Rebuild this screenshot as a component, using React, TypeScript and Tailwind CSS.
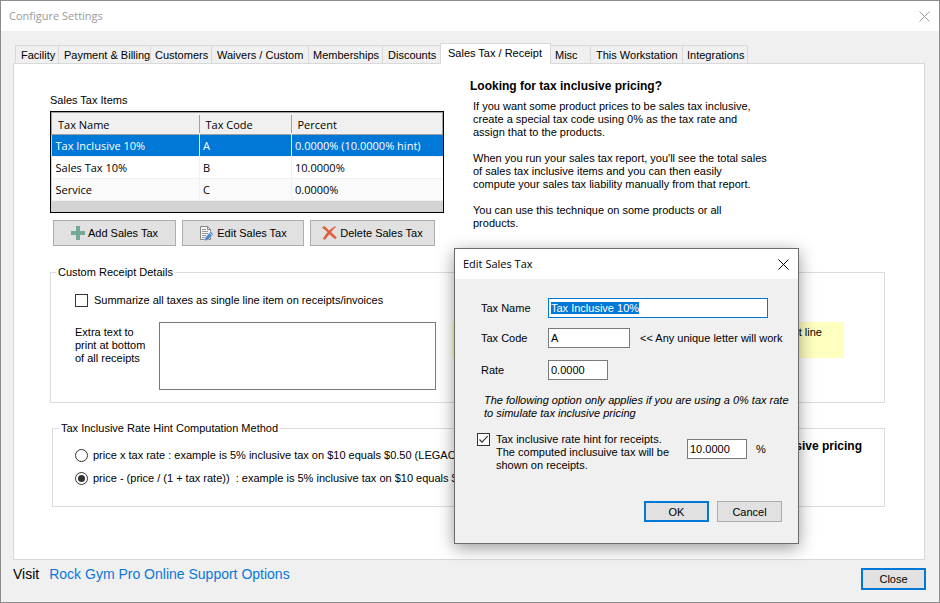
import { useEffect, useRef } from "react"

interface Tab {
  label: string
  className: string
}

const TABS: Tab[] = [
  { label: "Facility", className: "w-[43px] pl-[5px]" },
  { label: "Payment & Billing", className: "w-[92px] pl-[5px]" },
  { label: "Customers", className: "w-[61px] pl-[4px]" },
  { label: "Waivers / Custom", className: "w-[97px] pl-[5px]" },
  { label: "Memberships", className: "w-[74px] pl-[4px]" },
  { label: "Discounts", className: "w-[58px] pl-[5px]" },
  { label: "Sales Tax / Receipt", className: "" },
  { label: "Misc", className: "w-[39px] border-l-0 pl-[4px]" },
  { label: "This Workstation", className: "w-[92px] pl-[5px]" },
  { label: "Integrations", className: "w-[66px] border-r pl-[4px]" },
]

const TAX_ITEMS = [
  { name: "Tax Inclusive 10%", code: "A", percent: "0.0000% (10.0000% hint)", row: "bg-[#0078d7] text-white" },
  { name: "Sales Tax 10%", code: "B", percent: "10.0000%", row: "bg-white" },
  { name: "Service", code: "C", percent: "0.0000%", row: "bg-[#fafafa]" },
]

const SEGOE = "font-['Open_Sans','Noto_Sans',sans-serif]"
const BUTTON = "flex items-center justify-center border border-[#adadad] bg-[#e1e1e1] whitespace-nowrap"
const DEFAULT_BUTTON = "border-2 border-[#0078d7] bg-[#e1e1e1]"
const INPUT = "h-5 border bg-white px-[2px] outline-none"
const RADIO = "size-[13px] shrink-0 appearance-none rounded-full border border-[#333] bg-clip-content p-[2px] checked:bg-[#333]"

function CloseIcon() {
  return (
    <svg width="11" height="11" viewBox="0 0 11 11" fill="none" stroke="currentColor">
      <path d="M.5.5l10 10M10.5.5l-10 10" />
    </svg>
  )
}

function AddIcon() {
  return (
    <svg width="14" height="14" viewBox="0 0 14 14" fill="#74a997">
      <path d="M5 0h4v5h5v4H9v5H5V9H0V5h5z" />
    </svg>
  )
}

function EditIcon() {
  return (
    <svg width="15" height="15" viewBox="0 0 15 15" fill="none">
      <path d="M1.5.5h7l3 3v10h-10z" fill="#f4f4f4" stroke="#888" />
      <path d="M8.5.5v3h3" stroke="#888" />
      <path d="M3 3.5h4M3 5.5h6M3 7.5h6M3 9.5h4M3 11.5h3" stroke="#999" />
      <path d="M11.500 5.500l3 2.500-5.500 6-3.500 1 .8-3.600z" fill="#4f86c6" stroke="#dfe9f5" strokeWidth=".5" />
      <path d="M10.300 6.800l3 2.500" stroke="#cfe0f2" />
    </svg>
  )
}

function DeleteIcon() {
  return (
    <svg width="15" height="14" viewBox="0 0 15 14" fill="#dd5f43">
      <path d="M0 1.500L2.500 0c1.600 1.600 3 3.100 4.700 4.500C9.300 2.800 11.300 1.200 13.500.3l.5.8C12.200 2.600 10.600 4.200 9.200 6.100c1.600 1.800 3.500 3.600 5.600 5.200L13 13.200c-2-1.500-3.800-3.200-5.400-4.900C5.800 10 4.300 11.800 3 13.800L.8 13C2 10.600 3.700 8.400 5.500 6.300 3.700 4.600 1.900 3 0 1.500z" />
    </svg>
  )
}

function Checkbox({ id, checked }: { id: string; checked?: boolean }) {
  return (
    <span className="grid size-[13px] shrink-0">
      <input
        id={id}
        type="checkbox"
        defaultChecked={checked}
        className="peer col-start-1 row-start-1 size-[13px] appearance-none border border-[#333] bg-white"
      />
      <svg
        className="pointer-events-none invisible col-start-1 row-start-1 peer-checked:visible"
        viewBox="0 0 13 13"
        fill="none"
        stroke="#333"
        strokeWidth="1.2"
      >
        <path d="M2.500 6.500L5 9.200l5.700-6" />
      </svg>
    </span>
  )
}

function TaxTable() {
  return (
    <div className="mt-[3px] h-[102px] border border-black bg-[#d3d3d3]">
      <table className={`w-full table-fixed border-collapse text-left text-[11px] leading-[20px] ${SEGOE}`}>
        <colgroup>
          <col className="w-[148px]" />
          <col className="w-[92px]" />
          <col />
        </colgroup>
        <thead>
          <tr className="h-[22px] border border-[#a0a0a0] bg-[#f0f0f0]">
            {["Tax Name", "Tax Code", "Percent"].map((title, i) => (
              <th key={title} className="p-0 pt-px font-normal">
                <div className={`h-[18px] pl-[6px] leading-[20px] ${i < 2 ? "border-r border-[#a0a0a0]" : ""}`}>
                  {title}
                </div>
              </th>
            ))}
          </tr>
        </thead>
        <tbody>
          {TAX_ITEMS.map((item) => (
            <tr key={item.code} className={`h-[22px] border-b border-[#f0f0f0] ${item.row}`}>
              <td className="border-r border-[#f0f0f0] p-0 pl-[4px]">{item.name}</td>
              <td className="border-r border-[#f0f0f0] p-0 pl-[3px]">{item.code}</td>
              <td className="p-0 pl-[3px]">{item.percent}</td>
            </tr>
          ))}
        </tbody>
      </table>
    </div>
  )
}

function EditSalesTaxDialog() {
  const nameRef = useRef<HTMLInputElement>(null)

  useEffect(() => {
    nameRef.current?.focus()
    nameRef.current?.select()
  }, [])

  return (
    <div
      role="dialog"
      aria-labelledby="dialog-title"
      className="absolute top-[247px] left-[453px] w-[345px] border border-[#6b6b6b] bg-[#f0f0f0] shadow-[0_4px_16px_rgba(0,0,0,0.4)]"
    >
      <div className="flex h-[30px] items-center justify-between bg-white pr-[9px] pl-2">
        <h2 id="dialog-title" className={`text-[11px] ${SEGOE}`}>
          Edit Sales Tax
        </h2>
        <button aria-label="Close dialog">
          <CloseIcon />
        </button>
      </div>

      <form className="pt-[19px] pb-[21px]" onSubmit={(e) => e.preventDefault()}>
        <div className="flex flex-col gap-[10px] pl-[26px]">
          <div className="flex items-center">
            <label htmlFor="tax-name" className="w-[67px]">Tax Name</label>
            <input
              id="tax-name"
              ref={nameRef}
              defaultValue="Tax Inclusive 10%"
              className={`${INPUT} w-[220px] border-[#0078d7] selection:bg-[#0078d7] selection:text-white`}
            />
          </div>
          <div className="flex items-center">
            <label htmlFor="tax-code" className="w-[67px]">Tax Code</label>
            <input id="tax-code" defaultValue="A" className={`${INPUT} w-[82px] border-[#7a7a7a]`} />
            <span className="pl-[10px]">&lt;&lt; Any unique letter will work</span>
          </div>
          <div className="flex items-center pt-[2px]">
            <label htmlFor="rate" className="w-[67px]">Rate</label>
            <input id="rate" defaultValue="0.0000" className={`${INPUT} w-[60px] border-[#7a7a7a]`} />
          </div>
        </div>

        <p className="mt-[14px] pl-[29px] leading-[13px] italic">
          The following option only applies if you are using a 0% tax rate
          <br />
          to simulate tax inclusive pricing
        </p>

        <div className="mt-[13px] flex items-start pl-[22px]">
          <Checkbox id="rate-hint" checked />
          <label htmlFor="rate-hint" className="w-[197px] pl-[6px] leading-[13px]">
            Tax inclusive rate hint for receipts.
            <br />
            The computed inclusuive tax will be
            <br />
            shown on receipts.
          </label>
          <div className="mt-[6px] flex items-center">
            <input aria-label="Rate hint" defaultValue="10.0000" className={`${INPUT} w-[60px] border-[#7a7a7a]`} />
            <span className="pl-[9px]">%</span>
          </div>
        </div>

        <div className="mt-[29px] flex justify-end gap-2 pr-4">
          <button className={`${DEFAULT_BUTTON} h-[21px] w-[65px]`}>OK</button>
          <button className={`${BUTTON} h-[21px] w-[65px]`}>Cancel</button>
        </div>
      </form>
    </div>
  )
}

export default function App() {
  return (
    <div className="relative flex min-h-screen flex-col overflow-hidden border border-[#8c8c8c] bg-[#f0f0f0] font-['Liberation_Sans',Arial,sans-serif] text-[11px] leading-4 text-black">
      <header className="flex h-[30px] items-center justify-between bg-white pr-[9px] pl-2 text-[#999]">
        <h1 className={`text-[11px] ${SEGOE}`}>Configure Settings</h1>
        <button aria-label="Close window">
          <CloseIcon />
        </button>
      </header>

      <nav className="mt-3 flex items-end pl-[14px]">
        {TABS.map((tab) =>
          tab.label === "Sales Tax / Receipt" ? (
            <button
              key={tab.label}
              className="z-10 -mb-px h-[21px] w-[111px] border border-b-0 border-[#d9d9d9] bg-white pb-[2px] pl-[7px] text-left whitespace-nowrap"
            >
              {tab.label}
            </button>
          ) : (
            <button
              key={tab.label}
              className={`h-[18px] border-t border-l border-[#d9d9d9] text-left whitespace-nowrap ${tab.className}`}
            >
              {tab.label}
            </button>
          ),
        )}
      </nav>

      <main className="mr-[14px] ml-3 flex-1 border border-[#d9d9d9] bg-white pt-[14px] pr-[39px] pl-9">
        <section className="flex items-start gap-[26px]">
          <div className="w-[394px] shrink-0 pt-[14px]">
            <h2>Sales Tax Items</h2>
            <TaxTable />
            <div className="mt-[7px] flex gap-[6px] pl-[3px]">
              <button className={`${BUTTON} h-[26px] w-[123px] gap-[3px]`}>
                <AddIcon />
                Add Sales Tax
              </button>
              <button className={`${BUTTON} h-[26px] w-[122px] gap-[3px]`}>
                <EditIcon />
                Edit Sales Tax
              </button>
              <button className={`${BUTTON} h-[26px] w-[125px] gap-[3px]`}>
                <DeleteIcon />
                Delete Sales Tax
              </button>
            </div>
          </div>

          <div>
            <h2 className="text-[12px] font-bold">Looking for tax inclusive pricing?</h2>
            <div className="mt-[6px] flex flex-col gap-[13px] pl-[3px] leading-[13px]">
              <p>
                If you want some product prices to be sales tax inclusive,
                <br />
                create a special tax code using 0% as the tax rate and
                <br />
                assign that to the products.
              </p>
              <p>
                When you run your sales tax report, you'll see the total sales
                <br />
                of sales tax inclusive items and you can then easily
                <br />
                compute your sales tax liability manually from that report.
              </p>
              <p>
                You can use this technique on some products or all
                <br />
                products.
              </p>
            </div>
          </div>
        </section>

        <fieldset className="mt-[18px] border border-[#dcdcdc]">
          <legend className="ml-[5px] px-[2px]">Custom Receipt Details</legend>
          <div className="pt-3 pb-3 pl-6">
            <div className="flex items-center gap-[6px]">
              <Checkbox id="summarize" />
              <label htmlFor="summarize">Summarize all taxes as single line item on receipts/invoices</label>
            </div>
            <div className="mt-[14px] flex items-start">
              <label htmlFor="extra-text" className="w-[84px] pt-1 leading-[13px]">
                Extra text to
                <br />
                print at bottom
                <br />
                of all receipts
              </label>
              <textarea id="extra-text" className="h-[68px] w-[277px] resize-none border border-[#7a7a7a] bg-white" />
              <p className="mr-10 ml-4 h-9 flex-1 bg-[#ffffc0] pt-[2px] pr-[22px] text-right">t line</p>
            </div>
          </div>
        </fieldset>

        <fieldset className="mt-[17px] ml-[2px] border border-[#dcdcdc]">
          <legend className="ml-[6px] px-[2px]">Tax Inclusive Rate Hint Computation Method</legend>
          <div className="flex items-start justify-between pr-[22px] pb-[20px] pl-[22px]">
            <div className="flex flex-col gap-[7px] pt-[11px]">
              <label className="flex items-center gap-[5px] whitespace-pre">
                <input type="radio" name="method" className={RADIO} />
                price x tax rate : example is 5% inclusive tax on $10 equals $0.50 (LEGACY)
              </label>
              <label className="flex items-center gap-[5px] whitespace-pre">
                <input type="radio" name="method" defaultChecked className={RADIO} />
                {"price - (price / (1 + tax rate))  : example is 5% inclusive tax on $10 equals $0.4"}
              </label>
            </div>
            <p className="pt-[2px] text-[12px] font-bold">sive pricing</p>
          </div>
        </fieldset>
      </main>

      <footer className="flex items-start justify-between pt-[6px] pr-[13px] pb-3 pl-3">
        <p className="flex gap-[10px] text-[14px]">
          Visit
          <a href="#support" className="text-[#0b78d8]">
            Rock Gym Pro Online Support Options
          </a>
        </p>
        <button className={`${DEFAULT_BUTTON} mt-[2px] h-[22px] w-[65px]`}>Close</button>
      </footer>

      <EditSalesTaxDialog />
    </div>
  )
}
